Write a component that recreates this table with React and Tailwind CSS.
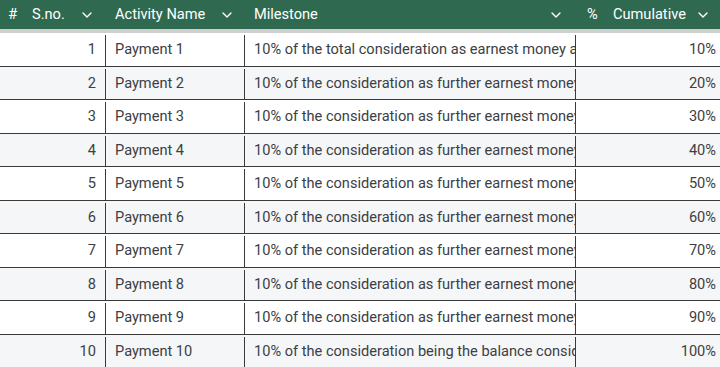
import { ChevronDown } from "lucide-react";

const rows = [
    { sno: 1, name: "Payment 1", milestone: "10% of the total consideration as earnest money along with the application", cum: "10%" },
    { sno: 2, name: "Payment 2", milestone: "10% of the consideration as further earnest money within 30 days", cum: "20%" },
    { sno: 3, name: "Payment 3", milestone: "10% of the consideration as further earnest money within 60 days", cum: "30%" },
    { sno: 4, name: "Payment 4", milestone: "10% of the consideration as further earnest money within 90 days", cum: "40%" },
    { sno: 5, name: "Payment 5", milestone: "10% of the consideration as further earnest money within 120 days", cum: "50%" },
    { sno: 6, name: "Payment 6", milestone: "10% of the consideration as further earnest money within 150 days", cum: "60%" },
    { sno: 7, name: "Payment 7", milestone: "10% of the consideration as further earnest money within 180 days", cum: "70%" },
    { sno: 8, name: "Payment 8", milestone: "10% of the consideration as further earnest money within 210 days", cum: "80%" },
    { sno: 9, name: "Payment 9", milestone: "10% of the consideration as further earnest money within 240 days", cum: "90%" },
    { sno: 10, name: "Payment 10", milestone: "10% of the consideration being the balance consideration on possession", cum: "100%" },
];

export default function App() {
    return (
        <div className="w-[720px] h-[367px] overflow-hidden bg-white text-[14.6px] font-['Roboto',sans-serif]">
            {/* header */}
            <div className="flex h-[29px] bg-[#2f6a50] text-white">
                <div className="w-[106px] flex items-center pl-[8px] pr-[11px]">
                    <span className="w-[24px] text-[15px]">#</span>
                    <span className="flex-1">S.no.</span>
                    <ChevronDown size={16} strokeWidth={2} />
                </div>
                <div className="w-[139px] flex items-center pl-[9px] pr-[10px]">
                    <span className="flex-1">Activity Name</span>
                    <ChevronDown size={16} strokeWidth={2} />
                </div>
                <div className="w-[331px] flex items-center pl-[9px] pr-[12px]">
                    <span className="flex-1">Milestone</span>
                    <ChevronDown size={16} strokeWidth={2} />
                </div>
                <div className="flex-1 flex items-center pl-[11px] pr-[9px]">
                    <span className="w-[26px]">%</span>
                    <span className="flex-1">Cumulative</span>
                    <ChevronDown size={16} strokeWidth={2} />
                </div>
            </div>
            <div className="h-[4px] bg-[#cfcfcf]"></div>

            {/* rows */}
            {rows.map((row, i) => (
                <div
                    key={row.sno}
                    className={`flex h-[33.5px] pt-[2px] border-b border-[#3a3a3a] text-[#3c4043] ${i % 2 === 1 ? "bg-[#f5f6f8]" : "bg-white"}`}
                >
                    <div className="w-[106px] flex items-center justify-end pr-[9px] border-r border-[#3a3a3a]">
                        {row.sno}
                    </div>
                    <div className="w-[139px] flex items-center pl-[9px] border-r border-[#3a3a3a]">
                        {row.name}
                    </div>
                    <div className="w-[331px] flex items-center pl-[9px] border-r border-[#3a3a3a] overflow-hidden whitespace-nowrap">
                        {row.milestone}
                    </div>
                    <div className="flex-1 flex items-center justify-end pr-[4px]">
                        {row.cum}
                    </div>
                </div>
            ))}
        </div>
    );
}
